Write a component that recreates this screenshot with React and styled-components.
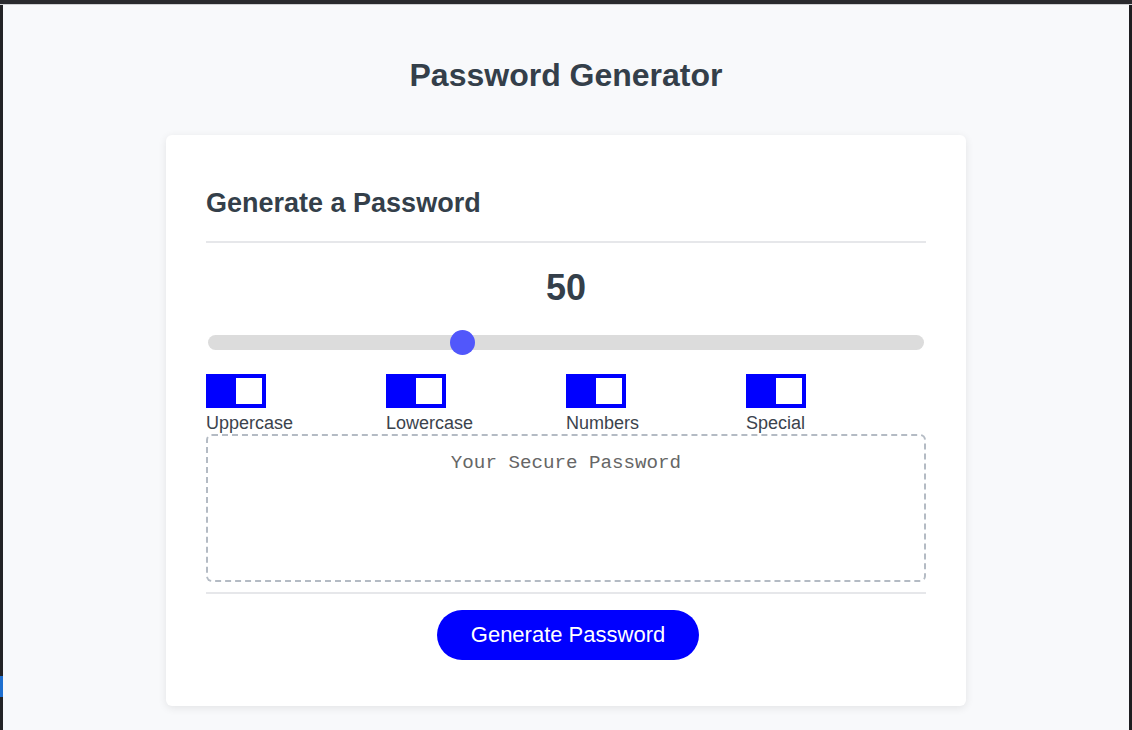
import React, { useState } from 'react';
import styled, { createGlobalStyle } from 'styled-components';

const GlobalStyle = createGlobalStyle`
  html, body {
    margin: 0;
    padding: 0;
    background: #2a2a2e;
  }
  body {
    font-family: "Liberation Sans", Arial, Helvetica, sans-serif;
    color: #343f4a;
  }
`;

const options = ['Uppercase', 'Lowercase', 'Numbers', 'Special'];

const App = () => {
  const [length, setLength] = useState(50);

  return (
    <styles.Frame>
      <GlobalStyle />
      <styles.TopBar />
      <styles.Window>
        <styles.LeftEdge />
        <styles.Page>
          <styles.Title>Password Generator</styles.Title>
          <styles.Card>
            <styles.Heading>Generate a Password</styles.Heading>
            <styles.Rule />
            <styles.Length>{length}</styles.Length>
            <styles.Slider
              type="range"
              min={8}
              max={128}
              value={length}
              onChange={(e) => setLength(Number(e.target.value))}
            />
            <styles.Options>
              {options.map((name) => (
                <styles.Option key={name}>
                  <styles.Switch>
                    <styles.Knob />
                  </styles.Switch>
                  <styles.OptionLabel>{name}</styles.OptionLabel>
                </styles.Option>
              ))}
            </styles.Options>
            <styles.Output>Your Secure Password</styles.Output>
            <styles.Rule $bottom />
            <styles.Button>Generate Password</styles.Button>
          </styles.Card>
        </styles.Page>
        <styles.RightEdge />
      </styles.Window>
    </styles.Frame>
  );
};

const styles = {
  Frame: styled.div`
    width: 1132px;
    height: 730px;
    display: flex;
    flex-direction: column;
    overflow: hidden;
  `,

  TopBar: styled.div`
    height: 4px;
    background: #2a2a2e;
    border-bottom: 1px solid #cfd0d3;
  `,

  Window: styled.div`
    flex: 1;
    display: flex;
  `,

  LeftEdge: styled.div`
    width: 3px;
    background: linear-gradient(
      to bottom,
      #232326 671px,
      #1f6fcf 671px,
      #1f6fcf 692px,
      #232326 692px
    );
  `,

  RightEdge: styled.div`
    width: 3px;
    background: #1e1e21;
  `,

  Page: styled.div`
    flex: 1;
    background: #f8f9fb;
    display: flex;
    flex-direction: column;
    align-items: center;
    padding-top: 52px;
  `,

  Title: styled.h1`
    margin: 0;
    font-size: 32px;
    font-weight: 700;
    color: #343f4a;
  `,

  Card: styled.div`
    box-sizing: border-box;
    width: 800px;
    margin-top: 41px;
    padding: 53px 40px 46px;
    background: #ffffff;
    border-radius: 6px;
    box-shadow: 0 2px 8px rgba(0, 0, 0, 0.09);
    display: flex;
    flex-direction: column;
    align-items: center;
  `,

  Heading: styled.h2`
    align-self: stretch;
    margin: 0;
    font-size: 27px;
    font-weight: 700;
    color: #343f4a;
  `,

  Rule: styled.div`
    align-self: stretch;
    height: 2px;
    background: #e6e7ea;
    margin: ${(p) => (p.$bottom ? '10px 0 16px' : '22px 0 24px')};
  `,

  Length: styled.div`
    font-size: 36px;
    font-weight: 700;
    color: #343f4a;
  `,

  Slider: styled.input`
    -webkit-appearance: none;
    appearance: none;
    align-self: stretch;
    margin: 21px 2px 19px;
    height: 25px;
    background: transparent;
    outline: none;

    &::-webkit-slider-runnable-track {
      height: 15px;
      border-radius: 8px;
      background: #dcdcdc;
    }

    &::-webkit-slider-thumb {
      -webkit-appearance: none;
      appearance: none;
      width: 25px;
      height: 25px;
      margin-top: -5px;
      border-radius: 50%;
      background: #5157fb;
      border: none;
    }
  `,

  Options: styled.div`
    align-self: stretch;
    display: grid;
    grid-template-columns: repeat(4, 1fr);
  `,

  Option: styled.label`
    display: flex;
    flex-direction: column;
    align-items: flex-start;
  `,

  Switch: styled.span`
    box-sizing: border-box;
    width: 60px;
    height: 34px;
    padding: 4px;
    background: #0000ff;
    display: flex;
    justify-content: flex-end;
  `,

  Knob: styled.span`
    width: 26px;
    height: 26px;
    background: #ffffff;
  `,

  OptionLabel: styled.span`
    margin-top: 5px;
    font-size: 18px;
    color: #3b434d;
  `,

  Output: styled.div`
    box-sizing: border-box;
    align-self: stretch;
    height: 148px;
    padding: 16px;
    border: 2px dashed #b4bbc4;
    border-radius: 6px;
    text-align: center;
    font-family: "Liberation Mono", "Courier New", monospace;
    font-size: 19.2px;
    color: #666666;
  `,

  Button: styled.button`
    width: 262px;
    height: 50px;
    margin-left: 4px;
    border: none;
    border-radius: 25px;
    background: #0000ff;
    color: #ffffff;
    font-family: "Liberation Sans", Arial, sans-serif;
    font-size: 22px;
    cursor: pointer;
  `,
};

export default App;
